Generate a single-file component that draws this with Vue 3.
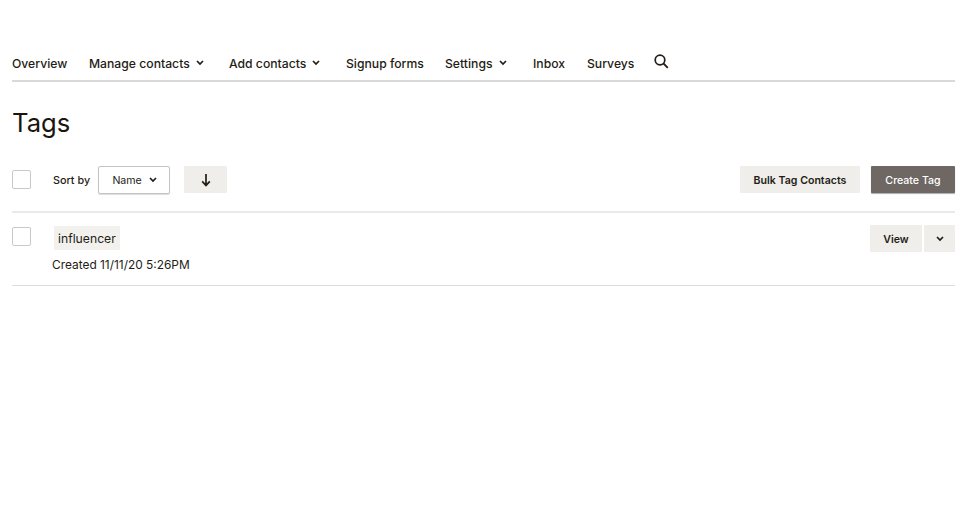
<script setup>
const navItems = [
  { label: 'Overview', caret: false, w: 77 },
  { label: 'Manage contacts', caret: true, w: 140 },
  { label: 'Add contacts', caret: true, w: 117 },
  { label: 'Signup forms', caret: false, w: 99 },
  { label: 'Settings', caret: true, w: 88 },
  { label: 'Inbox', caret: false, w: 54 },
  { label: 'Surveys', caret: false, w: 68 },
]
</script>

<template>
  <div class="page">
    <nav class="nav">
      <a v-for="item in navItems" :key="item.label" class="nav-item" :style="{ width: item.w + 'px' }">
        <span>{{ item.label }}</span>
        <svg v-if="item.caret" class="caret" width="8" height="6" viewBox="0 0 8 6"><path d="M1 1l3 3 3-3" fill="none" stroke="#241c15" stroke-width="1.7"/></svg>
      </a>
      <svg class="search" width="15" height="15" viewBox="0 0 15 15"><circle cx="6" cy="6" r="4.8" fill="none" stroke="#241c15" stroke-width="1.7"/><path d="M9.4 9.4l4.4 4.4" stroke="#241c15" stroke-width="1.9"/></svg>
    </nav>
    <h1 class="title">Tags</h1>
    <div class="toolbar">
      <span class="check"></span>
      <span class="sort-label">Sort by</span>
      <button class="select"><span class="select-text">Name</span>
        <svg width="8" height="6" viewBox="0 0 8 6"><path d="M1 1l3 3 3-3" fill="none" stroke="#241c15" stroke-width="1.7"/></svg>
      </button>
      <button class="btn arrow">
        <svg width="10" height="14" viewBox="0 0 10 14"><path d="M5 1v11M1.2 8.4L5 12.4l3.8-4" fill="none" stroke="#241c15" stroke-width="1.7"/></svg>
      </button>
      <div class="spacer"></div>
      <button class="btn bulk"><span class="btn-text">Bulk Tag Contacts</span></button>
      <button class="btn create"><span class="btn-text">Create Tag</span></button>
    </div>
    <div class="row">
      <span class="check"></span>
      <div class="info">
        <span class="tag">influencer</span>
        <div class="created">Created 11/11/20 5:26PM</div>
      </div>
      <div class="actions">
        <button class="btn view"><span class="btn-text">View</span></button>
        <button class="btn more">
          <svg width="8" height="6" viewBox="0 0 8 6"><path d="M1 1l3 3 3-3" fill="none" stroke="#241c15" stroke-width="1.7"/></svg>
        </button>
      </div>
    </div>
  </div>
</template>

<style scoped>
.page { width: 943px; margin-left: 12px; padding-top: 45px; font-family: Inter, "Liberation Sans", sans-serif; color: #241c15; }
.nav { display: flex; align-items: center; height: 35px; border-bottom: 2px solid #d9d9d9; }
.nav-item { display: flex; align-items: center; gap: 6px; padding-top: 2px; box-sizing: border-box; font-size: 12.2px; font-weight: 500; white-space: nowrap; height: 35px; }
.caret { margin-top: -1px; }
.search { margin-left: -1px; margin-top: -2px; }
.title { margin: 0; padding-top: 23px; padding-bottom: 1px; font-size: 25.6px; line-height: 36px; font-weight: 400; color: #1b1510; }
.toolbar { display: flex; align-items: flex-start; height: 28px; margin-top: 24px; padding-bottom: 17px; border-bottom: 2px solid #eceae6; }
.check { display: block; width: 17px; height: 17px; margin-top: 4px; border: 1px solid #c9c9c9; border-radius: 2px; flex: none; }
.sort-label { margin-left: 22px; padding-top: 1px; font-size: 10.8px; line-height: 28px; font-weight: 500; }
.select { display: flex; align-items: center; justify-content: center; gap: 7px; width: 72px; height: 28px; margin-left: 8px; background: #fff; border: 1px solid #c4c4c4; border-radius: 2px; box-shadow: 0 1px 1px #ddd; font: 400 10.6px Inter, sans-serif; color: #241c15; padding: 0; }
.select-text { padding: 1px 0 0 1px; }
.btn { display: flex; align-items: center; justify-content: center; height: 27px; background: #efeeea; border: none; border-radius: 1px; font: 600 10.6px Inter, sans-serif; color: #241c15; padding: 0; }
.btn-text { padding-top: 1px; }
.arrow { width: 43px; margin-left: 14px; }
.spacer { flex: 1; }
.bulk { width: 120px; }
.create { width: 84px; margin-left: 11px; background: #6e6763; color: #fff; box-shadow: 0 1px 1px #aaa; font-weight: 500; }
.row { display: flex; align-items: flex-start; height: 72px; border-bottom: 1px solid #dedddb; }
.row .check { margin-top: 14px; }
.info { margin-left: 21px; padding-top: 13px; }
.tag { display: inline-block; height: 24px; line-height: 25px; padding: 0 4px; margin-left: 2px; background: #f2f1ee; font-size: 12.2px; }
.created { margin-top: 5px; font-size: 11.9px; line-height: 20px; }
.actions { margin-left: auto; display: flex; gap: 2px; padding-top: 12px; }
.view { width: 52px; }
.more { width: 31px; }
</style>
